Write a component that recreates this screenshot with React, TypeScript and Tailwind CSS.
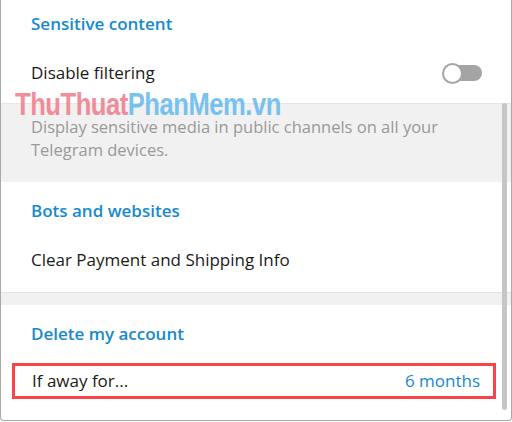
import React from 'react';

function Toggle() {
  return (
    <div className="relative w-[40px] h-[22px] flex items-center">
      <div className="absolute left-[5px] right-0 h-[16px] rounded-full bg-[#a4a4a4]" />
      <div className="absolute left-0 w-[21px] h-[21px] rounded-full bg-white border-[2.5px] border-[#a4a4a4]" />
    </div>
  );
}

function Heading({ children }: { children: React.ReactNode }) {
  return (
    <div className="h-[58px] flex items-center px-[30px] text-[17px] font-semibold text-[#168acd]">
      {children}
    </div>
  );
}

export default function App() {
  return (
    <div className="w-[512px] h-[422px] bg-white">
      <div
        className="relative w-[512px] h-[421px] bg-white border-l border-r border-b border-[#a9a9a9] rounded-b-[4px] overflow-hidden"
        style={{ fontFamily: '"Open Sans", "Noto Sans", sans-serif' }}
      >
        {/* Sensitive content */}
        <div className="h-[48px] flex items-center px-[30px] text-[17px] font-semibold text-[#168acd]">
          Sensitive content
        </div>
        <div className="h-[50px] flex items-center justify-between pl-[30px] pr-[29px] text-[17px] text-[#1a1a1a]">
          <span>Disable filtering</span>
          <Toggle />
        </div>
        <div className="h-[5px]" />
        <div className="bg-[#f1f1f1] border-t border-[#e6e6e6] pt-[11px] pb-[21px] px-[30px] text-[16.5px] leading-[23px] text-[#999999]">
          <p>Display sensitive media in public channels on all your</p>
          <p>Telegram devices.</p>
        </div>

        {/* Bots and websites */}
        <Heading>Bots and websites</Heading>
        <div className="h-[40px] flex items-center px-[30px] text-[17px] text-[#1a1a1a]">
          Clear Payment and Shipping Info
        </div>
        <div className="h-[12px]" />
        <div className="h-[13px] bg-[#f1f1f1] border-t border-[#e2e2e2]" />

        {/* Delete my account */}
        <Heading>Delete my account</Heading>
        <div className="ml-[11px] mr-[15px] h-[36px] border-[3px] border-[#f84448] flex items-center justify-between pl-[17px] pr-[13px] text-[17px]">
          <span className="text-[#1a1a1a]">If away for...</span>
          <span className="text-[#168acd]">6 months</span>
        </div>

        {/* scrollbar */}
        <div className="absolute top-[103px] left-[501px] w-[5px] h-[307px] rounded-full bg-[#c6c6c6]" />

        {/* watermark */}
        <div
          className="absolute top-[86px] left-[14px] text-[32px] font-bold tracking-[-0.6px] leading-[36px] whitespace-nowrap origin-left scale-x-[0.8] opacity-85"
          style={{ fontFamily: '"Liberation Sans Narrow", "Liberation Sans", sans-serif' }}
        >
          <span className="text-[#f07a8a]">ThuThuat</span>
          <span className="text-[#62b9ef]">PhanMem.vn</span>
        </div>
      </div>
    </div>
  );
}
